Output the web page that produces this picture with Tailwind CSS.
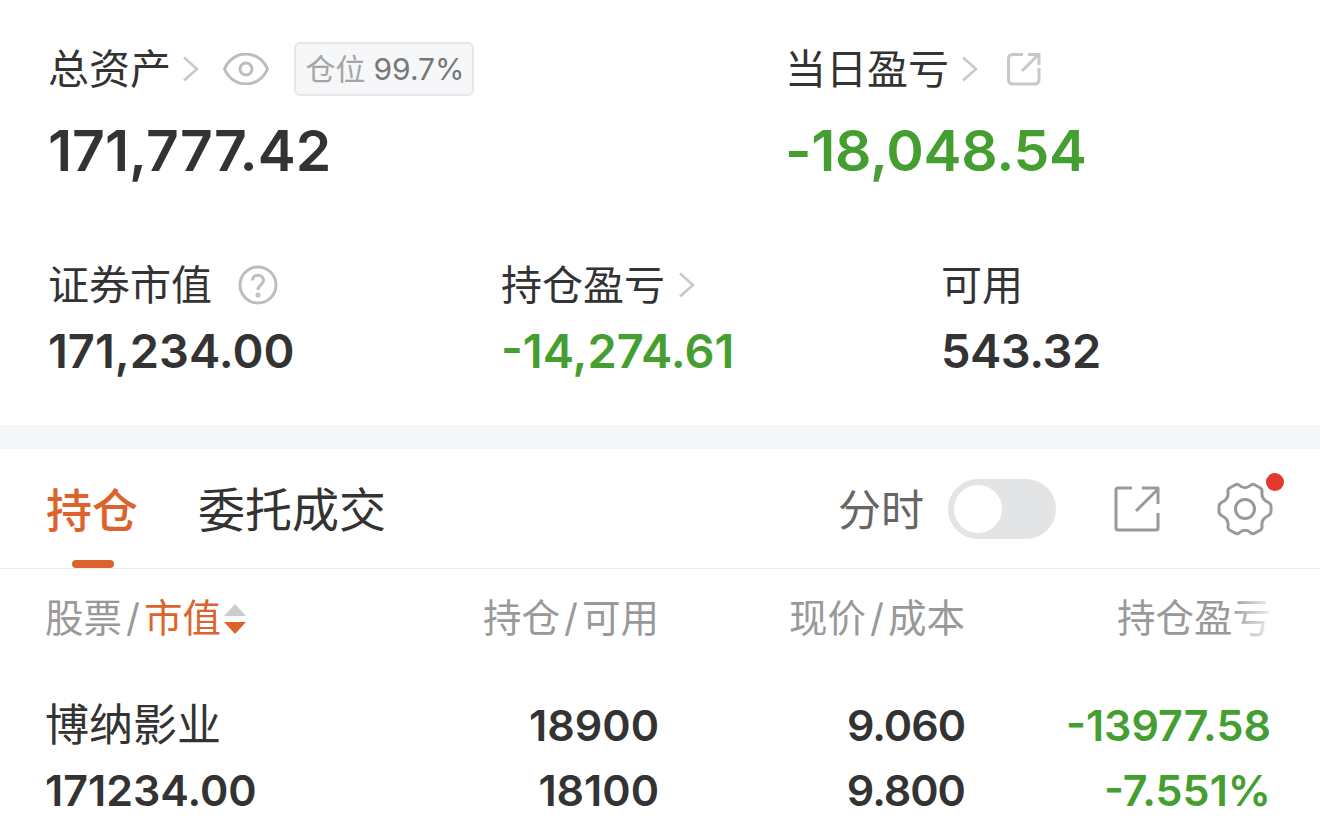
<!DOCTYPE html>
<html lang="zh-CN">
<head>
    <meta charset="UTF-8">
    <meta name="viewport" content="width=device-width, initial-scale=1.0">
    <title>持仓</title>
    <script src="https://cdn.jsdelivr.net/npm/@tailwindcss/browser@4"></script>
</head>
<body class="bg-white w-[1320px] h-[833px] overflow-hidden font-['Inter','Noto_Sans_CJK_SC',sans-serif] text-[#333333]">
    <!-- 资产概览 -->
    <section class="h-[425px] pl-[48px]">
        <div class="flex pt-[42px]">
            <div class="w-[737px]">
                <div class="flex items-center h-[54px]">
                    <span class="text-[41px] leading-[54px]">总资产</span>
                    <svg class="ml-[12px] w-[16px] h-[26px]" viewBox="0 0 16 26" fill="none" stroke="#c8c8c8" stroke-width="2.500"><path d="M1 1.500 L14 13 L1 24.500"/></svg>
                    <svg class="ml-[24px] w-[46px] h-[32px]" viewBox="0 0 46 32" fill="none" stroke="#bdbdbd" stroke-width="3"><path d="M1.500 16 C10 -4 36 -4 44.500 16 C36 36 10 36 1.500 16 Z"/><circle cx="23" cy="16" r="6"/></svg>
                    <div class="ml-[25px] w-[180px] h-[54px] flex items-center justify-center gap-[8px] rounded-[6px] border-2 border-[#e6e6e8] bg-[#f6f7f9] text-[30px] text-[#777777]">
                        <span class="text-[#a5a5a5] ml-[2px]">仓位</span><span>99.7%</span>
                    </div>
                </div>
                <div class="mt-[20px] text-[57px] leading-[70px] font-semibold">171,777.42</div>
            </div>
            <div>
                <div class="flex items-center h-[54px]">
                    <span class="text-[41px] leading-[54px]">当日盈亏</span>
                    <svg class="ml-[13px] w-[16px] h-[26px]" viewBox="0 0 16 26" fill="none" stroke="#c8c8c8" stroke-width="2.500"><path d="M1 1.500 L14 13 L1 24.500"/></svg>
                    <svg class="ml-[29px] w-[34px] h-[34px]" viewBox="0 0 34 34" fill="none" stroke="#c8c8c8" stroke-width="3"><path d="M16 2.500 H6 Q1.500 2.500 1.500 7 V27.500 Q1.500 32 6 32 H27.500 Q32 32 32 27.500 V16"/><path d="M15 19 L31 3 M21 2.500 H32 V13" /></svg>
                </div>
                <div class="mt-[20px] text-[57px] leading-[70px] font-semibold tracking-[-0.3px] text-[#449e30]">-18,048.54</div>
            </div>
        </div>
        <div class="flex mt-[72px]">
            <div class="w-[453px]">
                <div class="flex items-center h-[54px]">
                    <span class="text-[41px] leading-[54px]">证券市值</span>
                    <svg class="ml-[26px] w-[40px] h-[40px]" viewBox="0 0 40 40" fill="none" stroke="#bdbdbd" stroke-width="3"><circle cx="20" cy="20" r="18"/><path d="M14.500 15.500 C14.500 8.500 25.500 8.500 25.500 15.500 C25.500 19.500 20 20 20 25" /><circle cx="20" cy="30" r="1" /></svg>
                </div>
                <div class="mt-[11px] text-[47px] leading-[56px] font-semibold">171,234.00</div>
            </div>
            <div class="w-[440px]">
                <div class="flex items-center h-[54px]">
                    <span class="text-[41px] leading-[54px]">持仓盈亏</span>
                    <svg class="ml-[14px] w-[16px] h-[26px]" viewBox="0 0 16 26" fill="none" stroke="#c8c8c8" stroke-width="2.500"><path d="M1 1.500 L14 13 L1 24.500"/></svg>
                </div>
                <div class="mt-[11px] text-[47px] leading-[56px] font-semibold text-[#449e30]">-14,274.61</div>
            </div>
            <div>
                <div class="flex items-center h-[54px]">
                    <span class="text-[41px] leading-[54px]">可用</span>
                </div>
                <div class="mt-[11px] text-[47px] leading-[56px] font-semibold tracking-[-0.5px]">543.32</div>
            </div>
        </div>
    </section>

    <div class="h-[24px] bg-[#f5f6f8]"></div>

    <!-- 标签栏 -->
    <nav class="h-[120px] flex items-center border-b border-[#ececec] pl-[46px] pr-[47px]">
        <div class="relative h-full flex items-center">
            <span class="text-[46px] leading-[62px] mt-[2px] font-medium text-[#dd632d]">持仓</span>
            <span class="absolute bottom-0 left-[26px] w-[42px] h-[8px] rounded-full bg-[#dd632d]"></span>
        </div>
        <span class="ml-[60px] text-[47px] leading-[62px] mt-[2px]">委托成交</span>
        <span class="ml-auto text-[43px] leading-[62px] mt-[2px] text-[#666666]">分时</span>
        <div class="ml-[24px] w-[108px] h-[60px] rounded-full bg-[#e3e4e6] p-[6px]">
            <div class="w-[48px] h-[48px] rounded-full bg-white"></div>
        </div>
        <svg class="ml-[58px] w-[46px] h-[46px]" viewBox="0 0 46 46" fill="none" stroke="#999999" stroke-width="3" stroke-linejoin="round"><path d="M18 2 H4 Q2 2 2 4 V42 Q2 44 4 44 H42 Q44 44 44 42 V27"/><path d="M22 25 L44 3 M28 2 H44 V18"/></svg>
        <div class="relative ml-[57px] w-[56px] h-[56px]">
            <svg class="w-[56px] h-[56px]" viewBox="0 0 56 56" fill="none" stroke="#999999" stroke-width="3" stroke-linejoin="round"><path d="M18 4 Q20 2.500 22 4 Q28 9.500 34 4 Q36 2.500 38 4 L43.500 7 Q45.500 8.500 45 11 Q44 18 51.500 21.500 Q54 23 54 25.500 V30.500 Q54 33 51.500 34.500 Q44 38 45 45 Q45.500 47.500 43.500 49 L38 52 Q36 53.500 34 52 Q28 46.500 22 52 Q20 53.500 18 52 L12.500 49 Q10.500 47.500 11 45 Q12 38 4.500 34.500 Q2 33 2 30.500 V25.500 Q2 23 4.500 21.500 Q12 18 11 11 Q10.500 8.500 12.500 7 Z"/><circle cx="28" cy="28" r="9.500"/></svg>
            <span class="absolute -top-[8px] -right-[11px] w-[18px] h-[18px] rounded-full bg-[#e33a30]"></span>
        </div>
    </nav>

    <!-- 持仓表格 -->
    <div class="relative pl-[45px] pr-[49px]">
        <div class="flex items-center h-[99px] text-[38.5px] text-[#999999]">
            <div class="w-[300px] flex items-center">
                <span>股票</span><span class="mx-[4px]">/</span><span class="text-[#dd632d]">市值</span>
                <svg class="ml-[2px] w-[24px] h-[32px]" viewBox="0 0 24 32"><path d="M12 1 L23 13 H1 Z" fill="#cccccc"/><path d="M12 31 L23 19 H1 Z" fill="#dd632d"/></svg>
            </div>
            <div class="w-[314px] flex justify-end"><span>持仓</span><span class="mx-[4px]">/</span><span>可用</span></div>
            <div class="w-[306px] flex justify-end"><span>现价</span><span class="mx-[4px]">/</span><span>成本</span></div>
            <div class="flex-1 text-right">持仓盈亏</div>
        </div>
        <div class="absolute top-[20px] right-[46px] w-[44px] h-[60px] bg-gradient-to-r from-white/0 to-white/90"></div>
        <div class="flex pt-[25px]">
            <div class="w-[300px]">
                <div class="text-[44px] leading-[64px]">博纳影业</div>
                <div class="text-[43px] leading-[64px] font-semibold mt-[1px]">171234.00</div>
            </div>
            <div class="w-[314px] text-right text-[43px] leading-[64px] font-semibold">
                <div>18900</div>
                <div class="mt-[1px]">18100</div>
            </div>
            <div class="w-[306px] text-right text-[43px] leading-[64px] font-semibold tracking-[-1px]">
                <div>9.060</div>
                <div class="mt-[1px]">9.800</div>
            </div>
            <div class="flex-1 text-right text-[43px] leading-[64px] font-semibold text-[#449e30]">
                <div>-13977.58</div>
                <div class="mt-[1px]">-7.551%</div>
            </div>
        </div>
    </div>
</body>
</html>
